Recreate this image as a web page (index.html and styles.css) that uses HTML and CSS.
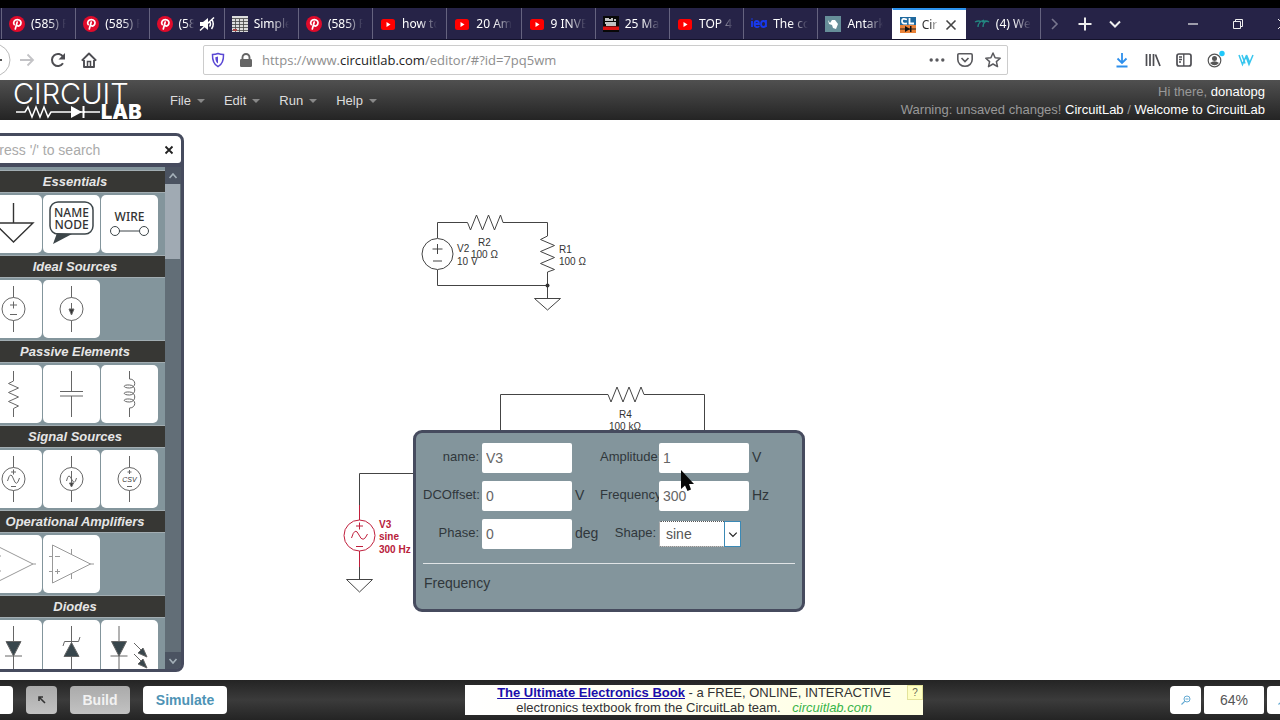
FILE: index.html
```html
<!DOCTYPE html>
<html lang="en">
<head>
<meta charset="utf-8">
<title>CircuitLab editor</title>
<link rel="stylesheet" href="styles.css">
</head>
<body>
<svg class="defs" aria-hidden="true">
  <symbol id="pin" viewBox="0 0 16 16"><circle cx="8" cy="8" r="8" fill="#e00b2b"/><path d="M5.2 8.6C3.8 6.3 5.4 3.7 8.3 3.7s4.3 2.2 3.5 4.4c-.6 1.9-3 2.6-4 1.2M8.2 6 6.3 13" fill="none" stroke="#fff" stroke-width="1.7" stroke-linecap="round"/></symbol>
  <symbol id="yt" viewBox="0 0 16 16"><rect x="1" y="3" width="14" height="11" rx="2.5" fill="#f00"/><path d="M6.5 6v5l4-2.5z" fill="#fff"/></symbol>
</svg>

<nav class="tabstrip">
  <div class="tabs">
    <a class="tab" href="#"><svg><use href="#pin"/></svg><span>(585) P</span></a>
    <a class="tab" href="#"><svg><use href="#pin"/></svg><span>(585) P</span></a>
    <a class="tab muted" href="#"><svg><use href="#pin"/></svg><span>(585)</span><svg class="mute" viewBox="0 0 16 16"><path d="M1 6h3l5-4v12l-5-4H1z" fill="#fff"/><path d="M10.500 5.500q2 2.500 0 5M12.500 3q3.500 5 0 10M1 14.500 15 1.500" stroke="#fff" stroke-width="1.500" fill="none"/></svg></a>
    <a class="tab" href="#"><svg viewBox="0 0 16 16"><rect width="16" height="16" fill="#ddd"/><path d="M0 2.500h16M0 5.500h16M0 8.500h16M0 11.500h16M0 14.500h16M3.500 3v13M7.500 3v13M11.500 3v13" stroke="#444" stroke-width=".8"/><path d="M1 13h4v2H1z" fill="#a44"/></svg><span>Simple</span></a>
    <a class="tab" href="#"><svg><use href="#pin"/></svg><span>(585) P</span></a>
    <a class="tab" href="#"><svg><use href="#yt"/></svg><span>how to</span></a>
    <a class="tab" href="#"><svg><use href="#yt"/></svg><span>20 Am</span></a>
    <a class="tab" href="#"><svg><use href="#yt"/></svg><span>9 INVE</span></a>
    <a class="tab" href="#"><svg viewBox="0 0 16 16"><path d="M0 0h16v16H0z" fill="#080808"/><path d="M0 10.500h16V14H0z" fill="#d11"/><path d="M3 2v3M5 2v3M7 3v2M9 2v3M12 3v2M2 7h11M3 9h10" stroke="#fff" stroke-width="1.500"/></svg><span>25 Ma</span></a>
    <a class="tab" href="#"><svg><use href="#yt"/></svg><span>TOP 4</span></a>
    <a class="tab" href="#"><svg viewBox="0 0 16 16"><path d="M1 5v6M1 2.500v1M4 8h4c0-4-4.500-4-4.500 0s4 3.500 4.500 2M15 4v7M15 8c0-4-5-4-5 0s5 4 5 0" fill="none" stroke="#1839ec" stroke-width="1.800"/></svg><span>The co</span></a>
    <a class="tab" href="#"><svg viewBox="0 0 16 16"><path d="M0 0h16v16H0z" fill="#668e99"/><path d="m3 4 2 3 2-3 3 0 3 4-2 5-3-1-1-3-3-1z" fill="#fff"/></svg><span>Antark</span></a>
    <a class="tab active" href="#"><svg viewBox="0 0 16 16"><path d="M0 0h16v8H0z" fill="#1f699e"/><path d="M0 8h16v8H0z" fill="#e98239"/><path d="M7 2.500Q2 .5 2 4t5 2.500M9.500 1v5.500H14" fill="none" stroke="#fff" stroke-width="1.800"/><path d="M0 12h16" stroke="#222"/><path d="M5 9v6l5-3zM10 9h1.500v6H10z" fill="#111"/></svg><span>Cir</span><button class="close" aria-label="Close tab"><svg viewBox="0 0 12 12"><path d="m1.500 1.500 9 9m0-9-9 9" stroke="#444" stroke-width="1.600"/></svg></button></a>
    <a class="tab last" href="#"><svg viewBox="0 0 16 16"><path d="M1 6q4-2 6 0M4 11q0-5 6-7M8 6q4-2 7 0M9 11q0-4 3-6" stroke="#238781" stroke-width="1.300" fill="none"/></svg><span>(4) We</span></a>
  </div>
  <div class="tabtools">
    <button aria-label="Scroll tabs"><svg viewBox="0 0 16 16"><path d="m5 3 5 5-5 5" stroke="#77768e" stroke-width="1.600" fill="none"/></svg></button>
    <button aria-label="New tab"><svg viewBox="0 0 16 16"><path d="M8 1.500v13M1.500 8h13" stroke="#eee" stroke-width="2"/></svg></button>
    <button aria-label="List tabs"><svg viewBox="0 0 16 16"><path d="m3 5.500 5 5 5-5" stroke="#eee" stroke-width="2" fill="none"/></svg></button>
  </div>
  <div class="wintools">
    <button aria-label="Minimize"><svg viewBox="0 0 12 12"><path d="M1 6h10" stroke="#eee" stroke-width="1.200"/></svg></button>
    <button aria-label="Restore"><svg viewBox="0 0 12 12"><path d="M1.500 3.500h7v7h-7zM3.500 3.500v-2h7v7h-2" stroke="#eee" fill="none"/></svg></button>
    <button aria-label="Close"><svg viewBox="0 0 12 12"><path d="m1 1 10 10m0-10L1 11" stroke="#eee"/></svg></button>
  </div>
</nav>

<div class="toolbar">
  <div class="nav">
    <button class="back" aria-label="Back"><svg width="11" height="34" viewBox="0 0 11 34"><circle cx="-6" cy="17" r="16" fill="#fff" stroke="#aaa" stroke-width=".8"/><path d="M0 17h2" stroke="#555" stroke-width="2"/></svg></button>
    <button aria-label="Forward"><svg viewBox="0 0 16 16"><path d="M1 8h13M8.500 2.500 14 8l-5.500 5.500" stroke="#c3c3c6" stroke-width="1.800" fill="none"/></svg></button>
    <button aria-label="Reload"><svg viewBox="0 0 16 16"><path d="M13 11.300A6 6 0 1 1 13.200 5" stroke="#4d4d52" stroke-width="2" fill="none"/><path d="M15 1v6.500H8.500z" fill="#4d4d52"/></svg></button>
    <button aria-label="Home"><svg viewBox="0 0 16 16"><path d="M.8 8.700 8 1.500l7.200 7.200M3 8v7h10V8" stroke="#4d4d52" stroke-width="1.900" fill="none" stroke-linejoin="round"/><path d="M6.500 15v-5.500h3V15" stroke="#4d4d52" stroke-width="1.500" fill="none"/></svg></button>
  </div>
  <div class="urlbar">
    <svg viewBox="0 0 16 16"><path d="M8 1.500c2 .8 3.500 1 5.500 1C13.700 8 13 12 8 14.700 3 12 2.300 8 2.500 2.500c2 0 3.500-.2 5.500-1z" stroke="#5a48d4" stroke-width="1.500" fill="none"/><path d="M8 4.500v7c-2-1.500-2.600-3-2.700-6.300z" fill="#5a48d4"/></svg>
    <svg class="lock" viewBox="0 0 16 16"><path d="M4.500 8V5.500a3.500 3.500 0 0 1 7 0V8" stroke="#666" stroke-width="1.900" fill="none"/><rect x="2" y="7" width="12" height="8" rx="1.200" fill="#666"/></svg>
    <a class="url" href="#">https://www.<b>circuitlab.com</b>/editor/#?id=7pq5wm</a>
    <svg viewBox="0 0 16 16"><g fill="#5a5a5e"><circle cx="2.200" cy="8" r="1.700"/><circle cx="8" cy="8" r="1.700"/><circle cx="13.800" cy="8" r="1.700"/></g></svg>
    <svg viewBox="0 0 16 16"><path d="M2 1.800h12q1.200 0 1.200 1.200v4.500a7.200 6.800 0 0 1-14.400 0V3Q.8 1.800 2 1.800z" stroke="#5a5a5e" stroke-width="1.600" fill="none"/><path d="m4.500 6 3.500 3.500L11.500 6" stroke="#5a5a5e" stroke-width="1.700" fill="none"/></svg>
    <svg viewBox="0 0 16 16"><path d="m8 1 2.100 4.700 5.100.5-3.800 3.400 1.100 5L8 12l-4.500 2.600 1.100-5L.8 6.200l5.100-.5z" stroke="#5a5a5e" stroke-width="1.500" fill="none" stroke-linejoin="round"/></svg>
  </div>
  <div class="actions">
    <button aria-label="Downloads"><svg viewBox="0 0 16 16"><path d="M8 1v10M3.500 6.500 8 11l4.500-4.500M2.500 14.500h11" stroke="#2e8fec" stroke-width="1.800" fill="none"/></svg></button>
    <button aria-label="Library"><svg viewBox="0 0 16 16"><path d="M1.500 2v12M5 2v12M8.500 2v12M10.500 2.500l4.500 11.500" stroke="#4d4d52" stroke-width="1.700"/></svg></button>
    <button aria-label="Sidebar"><svg viewBox="0 0 16 16"><rect x="1" y="2" width="14" height="12" rx="2" stroke="#4d4d52" stroke-width="1.700" fill="none"/><path d="M7.800 2v12M3 5h3M3 7.500h3M3 10h2" stroke="#4d4d52" stroke-width="1.300"/></svg></button>
    <button aria-label="Account"><svg class="account" viewBox="0 0 16 16"><circle cx="7.500" cy="8.500" r="6.300" stroke="#555" stroke-width="1.200" fill="none"/><circle cx="7.500" cy="6.500" r="2.500" fill="#555"/><path d="M3 11q4.500-3.500 9 0-4.500 4.500-9 0z" fill="#555"/><circle cx="15" cy="1.500" r="2.700" fill="#20c8fa"/></svg></button>
    <button aria-label="Wappalyzer"><svg viewBox="0 0 16 16"><path d="m1 3 3.500 9.500L8 4.500l3 8L15 3M4 3l3 8.500M8.500 3l3 7" stroke="#39c6ee" stroke-width="1.500" fill="none"/></svg></button>
  </div>
</div>

<header class="appbar">
  <svg class="logo" width="142" height="40" viewBox="0 0 142 40" role="img" aria-label="CircuitLab">
    <text class="logo-thin" x="5" y="23">CIRCUIT</text>
    <path d="M8 31h9l3-5 4 10 4-10 4 10 4-10 4 10 3-5h34" stroke="#fff" stroke-width="1.500" fill="none"/>
    <path d="M63 25v12l11-6z" fill="#fff"/><path d="M75.500 25v12" stroke="#fff" stroke-width="2"/><path d="M76 31h16" stroke="#fff" stroke-width="1.500"/>
    <text class="logo-bold" x="93" y="38">LAB</text>
  </svg>
  <div class="menus">
    <button>File<i></i></button><button>Edit<i></i></button><button>Run<i></i></button><button>Help<i></i></button>
  </div>
  <div class="status">
    <p>Hi there, <a href="#">donatopg</a></p>
    <p>Warning: unsaved changes! <a href="#">CircuitLab</a> / <a href="#">Welcome to CircuitLab</a></p>
  </div>
</header>

<main class="workspace">
  <svg class="schematic" width="1280" height="560" viewBox="0 120 1280 560" role="img" aria-label="Schematic">
    <g class="wire">
      <path d="M437.500 238v-15.500h30l3 7.500 6-15 6 15 6-15 6 15 6-15 2.500 7.500h44.500V236l-7 3.500 14 6-14 6 14 6-14 6 14 6-7 2.500V298M437.500 270v15.500h110M534.500 298.500h26L547.500 310z"/>
      <circle cx="437.500" cy="254" r="15.500"/>
      <path d="M432.500 249h10M437.500 244v10M433 261h9"/>
      <path d="M500.500 432V394.500h107.500l3 7.500 6-15 6 15 6-15 6 15 6-15 3 7.500h60.500V432"/>
      <path d="M414 473.500h-54.500V505M359.500 567v12.500M346.500 579.500h26L359.500 592z"/>
    </g>
    <circle cx="547.500" cy="285.500" r="2" fill="#333"/>
    <g class="part">
      <text x="457" y="252">V2</text><text x="457" y="265">10 V</text>
      <text x="478" y="246">R2</text><text x="471" y="258">100 Ω</text>
      <text x="559" y="253">R1</text><text x="559" y="265">100 Ω</text>
      <text x="619" y="418">R4</text><text x="609" y="430">100 kΩ</text>
    </g>
    <g class="selected">
      <path d="M359.500 505v15M359.500 551v16M356 526h7M359.500 522.500v7M356 546.500h7M351.500 538q3.500-12 7.500-3t8.500-1"/>
      <circle cx="359.500" cy="535.500" r="15.500"/>
      <text x="379" y="528">V3</text><text x="379" y="540">sine</text><text x="379" y="553">300 Hz</text>
    </g>
  </svg>

  <aside class="palette">
    <div class="search"><input type="text" placeholder="Press '/' to search" aria-label="Search parts"><button aria-label="Clear"><svg viewBox="0 0 10 10"><path d="m1.500 1.500 7 7m0-7-7 7" stroke="#222" stroke-width="1.800"/></svg></button></div>
    <div class="list">
      <div class="groups">
        <h2>Essentials</h2>
        <div class="tiles">
          <button aria-label="Ground"><svg viewBox="0 0 57 58"><path d="M28.500 8v20M9 28h39L28.500 47z" stroke="#333" stroke-width="1.400" fill="none"/></svg></button>
          <button aria-label="Name node"><svg viewBox="0 0 57 58"><rect x="7" y="7" width="43" height="32" rx="8" stroke="#3c4549" stroke-width="1.500" fill="#fff"/><path d="m14 38-4 11 19-10z" fill="#3c4549"/><text x="28.500" y="22">NAME</text><text x="28.500" y="34">NODE</text></svg></button>
          <button aria-label="Wire"><svg viewBox="0 0 57 58"><text x="28.500" y="26">WIRE</text><path d="M18 36h20" stroke="#3c4549"/><g stroke="#3c4549" fill="none"><circle cx="14" cy="36" r="4.500"/><circle cx="43" cy="36" r="4.500"/></g></svg></button>
        </div>
        <h2>Ideal Sources</h2>
        <div class="tiles">
          <button aria-label="Voltage source"><svg class="fine" viewBox="0 0 57 58"><circle cx="28.500" cy="29" r="11.500"/><path d="M28.500 6v11.500M28.500 40.500V52M25 25h7M28.500 21.500v7M25 34.500h7"/></svg></button>
          <button aria-label="Current source"><svg class="fine" viewBox="0 0 57 58"><circle cx="28.500" cy="29" r="11.500"/><path d="M28.500 6v11.500M28.500 40.500V52M28.500 23v8"/><path d="M26 29h5l-2.500 6z" fill="#333"/></svg></button>
        </div>
        <h2>Passive Elements</h2>
        <div class="tiles">
          <button aria-label="Resistor"><svg class="fine" viewBox="0 0 57 58"><path d="M28.500 6v10l-5 2.500 10 4.500-10 4.500 10 4.500-10 4.500 10 4.500-5 2.500V52"/></svg></button>
          <button aria-label="Capacitor"><svg class="fine" viewBox="0 0 57 58"><path d="M28.500 6v20.500M17 26.500h23M17 31h23M28.500 31v21"/></svg></button>
          <button aria-label="Inductor"><svg class="fine" viewBox="0 0 57 58"><path d="M28.500 6v8c7 0 7 9 0 9-7 0-7-3.500 0-3 7 0 7 10 0 10-7 0-7-3.500 0-3 7 0 7 10 0 10-7 0-7-3.500 0-3 7 0 7 9 0 9v9"/></svg></button>
        </div>
        <h2>Signal Sources</h2>
        <div class="tiles">
          <button aria-label="Sine voltage"><svg class="fine" viewBox="0 0 57 58"><circle cx="28.500" cy="29" r="11.500"/><path d="M28.500 6v11.500M28.500 40.500V52M26 22h5M28.500 19.500v5M26 36.500h5M22.500 31q3-11 6-2t6-1"/></svg></button>
          <button aria-label="Sine current"><svg class="fine" viewBox="0 0 57 58"><circle cx="28.500" cy="29" r="11.500"/><path d="M28.500 6v11.500M28.500 40.500V52M28.500 21v13M23.500 31q2-9 5-2t5-1"/><path d="M26.500 33h4l-2 4z" fill="#333"/></svg></button>
          <button aria-label="CSV source"><svg class="fine" viewBox="0 0 57 58"><circle cx="28.500" cy="29" r="11.500"/><path d="M28.500 6v11.500M28.500 40.500V52M26.500 22h4M28.500 20v4M26 36.500h5"/><text class="csv" x="28.500" y="32">CSV</text></svg></button>
        </div>
        <h2>Operational Amplifiers</h2>
        <div class="tiles">
          <button aria-label="Op amp"><svg class="fine light" viewBox="0 0 57 58"><path d="M10 10v38l38-19zM48 29h3M6 21h10M6 36h10"/></svg></button>
          <button aria-label="Powered op amp"><svg class="fine light" viewBox="0 0 57 58"><path d="M9.500 10v38l38-19zM47 29h4M6 21.500h4M12 21.500h5M6 36.500h4M12 36.500h5M14.500 34v5M28.500 14v6M28.500 38v6"/></svg></button>
        </div>
        <h2>Diodes</h2>
        <div class="tiles">
          <button aria-label="Diode"><svg class="fine" viewBox="0 0 57 58"><path d="M28.500 6v46M20 36h17"/><path d="M21 21.500h15L28.500 36z" fill="#38464c"/></svg></button>
          <button aria-label="Zener diode"><svg class="fine" viewBox="0 0 57 58"><path d="M28.500 6v46M20 26l1.500-4.500h14L37 17"/><path d="M21 36.500h15l-7.500-14z" fill="#38464c"/></svg></button>
          <button aria-label="LED"><svg class="fine" viewBox="0 0 57 58"><path d="M18 6v46M9.500 36h17M33 23l10 10M33 34l10 10"/><path d="M10.500 21.500h15L18 36zM46 37l-9-4 5-5zM46 48l-9-4 5-5z" fill="#38464c"/></svg></button>
        </div>
      </div>
      <div class="scroll">
        <button aria-label="Scroll up"><svg viewBox="0 0 10 10"><path d="m1.500 7 3.500-4 3.500 4" stroke="#a4b0b8" stroke-width="1.600" fill="none"/></svg></button>
        <div class="thumb"></div>
        <button class="down" aria-label="Scroll down"><svg viewBox="0 0 10 10"><path d="m1.500 3 3.500 4 3.500-4" stroke="#a4b0b8" stroke-width="1.600" fill="none"/></svg></button>
      </div>
    </div>
  </aside>

  <form class="props">
    <div class="fields">
      <label for="n">name:</label><input id="n" type="text" value="V3"><span></span>
      <label for="a">Amplitude:</label><input id="a" type="text" value="1"><span>V</span>
      <label for="d">DCOffset:</label><input id="d" type="text" value="0"><span>V</span>
      <label for="f">Frequency:</label><input id="f" type="text" value="300"><span>Hz</span>
      <label for="p">Phase:</label><input id="p" type="text" value="0"><span>deg</span>
      <label for="s">Shape:</label><div class="picker"><select id="s"><option>sine</option><option>square</option><option>triangle</option></select><svg viewBox="0 0 16 24"><path d="m4.500 10.500 4 4 4-4" stroke="#222" stroke-width="1.300" fill="none"/></svg></div><span></span>
    </div>
    <p class="hint">Frequency</p>
  </form>
  <svg class="cursor" width="14" height="21" viewBox="0 0 14 21" aria-hidden="true"><path d="M1 0v19l4-3.500L7.500 21l3.500-1.500L9 14h5z" fill="#080808"/></svg>
</main>

<footer class="bottombar">
  <div class="group">
    <button class="edge" aria-label="Add"></button>
    <button class="square grey" aria-label="Select"><svg viewBox="0 0 10 10"><path d="m2 2 6 6M2 6V2h4" stroke="#333" stroke-width="1.600" fill="none"/></svg></button>
    <button class="build grey">Build</button>
    <button class="simulate">Simulate</button>
  </div>
  <div class="ad">
    <p><a href="#">The Ultimate Electronics Book</a> - a FREE, ONLINE, INTERACTIVE</p>
    <p>electronics textbook from the CircuitLab team. <em>circuitlab.com</em></p>
    <button aria-label="About this ad">?</button>
  </div>
  <div class="group zoom">
    <button class="square" aria-label="Zoom out"><svg viewBox="0 0 10 10"><circle cx="6" cy="4" r="3" stroke="#62a9d2" fill="none"/><path d="M4.500 4h3M3.700 6.300.5 9.500" stroke="#62a9d2" stroke-width="1.200"/></svg></button>
    <button class="level">64%</button>
    <button class="square cut" aria-label="Zoom in"><svg viewBox="0 0 10 10"><circle cx="6" cy="4" r="3" stroke="#62a9d2" fill="none"/><path d="M4.500 4h3M6 2.500v3M3.700 6.300.5 9.500" stroke="#62a9d2" stroke-width="1.200"/></svg></button>
  </div>
</footer>
</body>
</html>
```
FILE: styles.css
```css
* { box-sizing: border-box; }
body {
  margin: 0;
  min-height: 100vh;
  display: flex;
  flex-direction: column;
  overflow: hidden;
  background: #fff;
  font-family: "Liberation Sans", Arial, sans-serif;
  font-size: 13px;
}
p, h2 { margin: 0; }
a { color: inherit; text-decoration: none; }
button { margin: 0; padding: 0; border: 0; background: none; font: inherit; color: inherit; flex: none; }
svg { display: block; flex: none; }
.defs { position: absolute; width: 0; height: 0; }

.tabstrip {
  display: flex;
  height: 40px;
  border-top: 8px solid #000;
  border-bottom: 1px solid #14132b;
  background: #262347;
  color: #fff;
  font: 12px "Noto Sans", "Open Sans", sans-serif;
}
.tabs { display: flex; flex: 0 1 1041px; min-width: 0; padding-left: 1px; }
.tab {
  flex: 1 1 0;
  min-width: 0;
  display: flex;
  align-items: center;
  gap: 6px;
  padding: 0 9px 0 7px;
  border-left: 1px solid #65637f;
}
.tab > svg { width: 16px; height: 16px; }
.tab span {
  flex: 1;
  min-width: 0;
  overflow: hidden;
  white-space: nowrap;
  -webkit-mask-image: linear-gradient(90deg, #000 50%, transparent);
  mask-image: linear-gradient(90deg, #000 50%, transparent);
}
.tab.muted { gap: 5px; }
.tab.active { background: #fff; color: #333; border-left-color: #fff; border-top: 2px solid #2b93ef; }
.tab.active + .tab { border-left-color: #262347; border-right: 1px solid #65637f; }
.close svg { width: 12px; height: 12px; }
.tabtools { display: flex; align-items: center; gap: 14px; padding-left: 6px; }
.tabtools svg { width: 16px; height: 16px; }
.wintools { display: flex; align-items: center; gap: 33px; margin-left: auto; margin-right: -9px; }
.wintools svg { width: 12px; height: 12px; }

.toolbar {
  display: grid;
  grid-template-columns: 203px 1fr 272px;
  align-items: center;
  height: 40px;
  background: #fff;
}
.nav { display: flex; align-items: center; gap: 15px; }
.back { margin-right: -7px; }
.nav svg, .actions svg { width: 16px; height: 16px; }
.nav .back svg { width: 11px; height: 34px; }
.urlbar {
  display: flex;
  align-items: center;
  gap: 12px;
  height: 30px;
  padding: 0 6px;
  border: 1px solid #ccc;
  border-radius: 2px;
  color: #8e8e8e;
  font: 13px "Open Sans", "Noto Sans", sans-serif;
}
.urlbar svg { width: 16px; height: 16px; }
.lock { margin-right: -4px; }
.url { flex: 1; }
.url b { font-weight: 400; color: #222; }
.actions { display: flex; gap: 15px; padding-left: 106px; }
.account { overflow: visible; }

.appbar {
  display: flex;
  align-items: center;
  height: 40px;
  padding-top: 1px;
  background: linear-gradient(#505050, #242424);
  color: #ddd;
}
.logo { margin: 0 20px 0 8px; fill: #fff; }
.logo-thin { font: 300 29px Inter, sans-serif; }
.logo-bold { font: 900 20px Inter, sans-serif; }
.menus { display: flex; gap: 19px; }
.menus button { display: flex; align-items: center; gap: 6px; }
.menus i { border: 4px solid transparent; border-top-color: #888; border-bottom: 0; }
.status { margin-left: auto; padding-right: 15px; text-align: right; line-height: 18px; color: #999; }
.status a { color: #fff; }

.workspace { position: relative; flex: 1; min-height: 560px; overflow: hidden; }
.schematic { position: absolute; left: 0; top: 0; }
.wire { fill: none; stroke: #444; }
.part { font-size: 10px; fill: #333; }
.selected { font-size: 10px; font-weight: 700; fill: #b8203a; }
.selected path, .selected circle { fill: none; stroke: #c01f3c; }

.palette {
  position: absolute;
  left: -18px;
  top: 13px;
  bottom: 8px;
  width: 202px;
  display: flex;
  flex-direction: column;
  border: 3px solid #464b5e;
  border-radius: 8px;
  background: #464b5e;
  overflow: hidden;
}
.search { display: flex; align-items: center; height: 27px; margin-bottom: 4px; padding-right: 7px; background: #fff; border-radius: 3px; }
.search input { flex: 1; min-width: 0; border: 0; padding: 0 0 0 5px; background: none; font: 14px "Liberation Sans", Arial, sans-serif; }
.search input::placeholder { color: #aaa; }
.search svg { width: 10px; height: 10px; }
.list { display: flex; flex: 1; min-height: 0; }
.groups { flex: 1; overflow: hidden; padding-top: 4px; background: #83959c; }
.groups h2 {
  height: 21px;
  background: #373734;
  color: #e6e6e6;
  font-size: 13px;
  font-style: italic;
  line-height: 21px;
  text-align: center;
  box-shadow: 0 0 0 1px #a2adb2;
}
.tiles { display: flex; gap: 1px; height: 64px; padding-top: 3px; }
.tiles button { width: 57px; height: 58px; border-radius: 5px; background: #fff; }
.tiles text { font: 500 12px "Noto Sans", sans-serif; fill: #333; text-anchor: middle; }
.fine { fill: none; stroke: #666; stroke-width: 1; }
.light { stroke: #999; }
.tiles .csv { font: italic 7px "Liberation Sans", sans-serif; stroke: none; }
.scroll { display: flex; flex-direction: column; width: 16px; background: #626e77; }
.scroll button { display: grid; place-items: center; height: 17px; background: #4b5361; }
.scroll .down { margin-top: auto; }
.scroll svg { width: 10px; height: 10px; }
.thumb { height: 75px; margin-right: 1px; background: #a0aab3; }

.props {
  position: absolute;
  left: 413px;
  top: 310px;
  width: 392px;
  padding: 10px 7px 18px;
  border: 3px solid #464b5e;
  border-radius: 9px;
  background: #83959c;
  color: #30373b;
}
.fields {
  display: grid;
  grid-template-columns: 56px 90px 22px 56px 90px 1fr;
  grid-auto-rows: 30px;
  gap: 8px 3px;
  align-items: center;
  padding-bottom: 14px;
  border-bottom: 1px solid #e0e4e6;
}
.fields label { text-align: right; white-space: nowrap; line-height: 16px; padding-bottom: 2px; }
.fields span { font-size: 14px; line-height: 16px; padding-bottom: 2px; }
.fields input { width: 90px; height: 30px; border: 0; border-radius: 2px; padding: 0 4px; background: #fff; color: #666; font: 14px "Liberation Sans", Arial, sans-serif; }
.picker { position: relative; width: 82px; height: 26px; }
.picker select {
  appearance: none;
  width: 100%;
  height: 100%;
  padding: 0 6px;
  border: 1px dotted #555;
  border-radius: 2px;
  background: #fff;
  color: #555;
  font: 14px "Liberation Sans", Arial, sans-serif;
}
.picker svg { position: absolute; right: 0; top: 0; width: 17px; height: 26px; border: 1px solid #3b89b5; pointer-events: none; background: #fff; }
.hint { padding: 11px 1px 0; font-size: 14px; line-height: 16px; }
.cursor { position: absolute; left: 680px; top: 350px; }

.bottombar {
  display: grid;
  grid-template-columns: 1fr auto 1fr;
  align-items: center;
  height: 40px;
  background: linear-gradient(#242424, #3b3b3b 50%, #242424);
}
.group { display: flex; gap: 13px; }
.group button { height: 28px; border-radius: 4px; background: #fff; }
.group .edge { width: 13px; border-radius: 0 4px 4px 0; }
.group .square { display: grid; place-items: center; width: 31px; }
.square svg { width: 10px; height: 10px; }
.group .grey { background: linear-gradient(#aaa, #c2c2c2); }
.group .build { width: 60px; color: #f2f2f2; font-size: 14px; font-weight: 700; }
.group .simulate { width: 84px; color: #4e93b5; font-size: 14px; font-weight: 700; }
.ad {
  position: relative;
  width: 458px;
  margin-left: 108px;
  height: 30px;
  background: linear-gradient(90deg, #fff, #ffffe0);
  color: #333;
  line-height: 15px;
  text-align: center;
}
.ad a { color: #1a0dab; font-weight: 700; text-decoration: underline; }
.ad em { margin-left: 8px; color: #38b449; }
.ad button { position: absolute; right: 0; top: 0; width: 16px; height: 15px; border: 1px solid #e3e39b; background: #ffffc4; font-size: 10px; line-height: 12px; color: #665; }
.zoom { gap: 3px; justify-content: flex-end; overflow: hidden; }
.group .level { width: 60px; color: #555; font-size: 14px; border-radius: 2px; }
.group .cut { margin-right: -18px; }
```
